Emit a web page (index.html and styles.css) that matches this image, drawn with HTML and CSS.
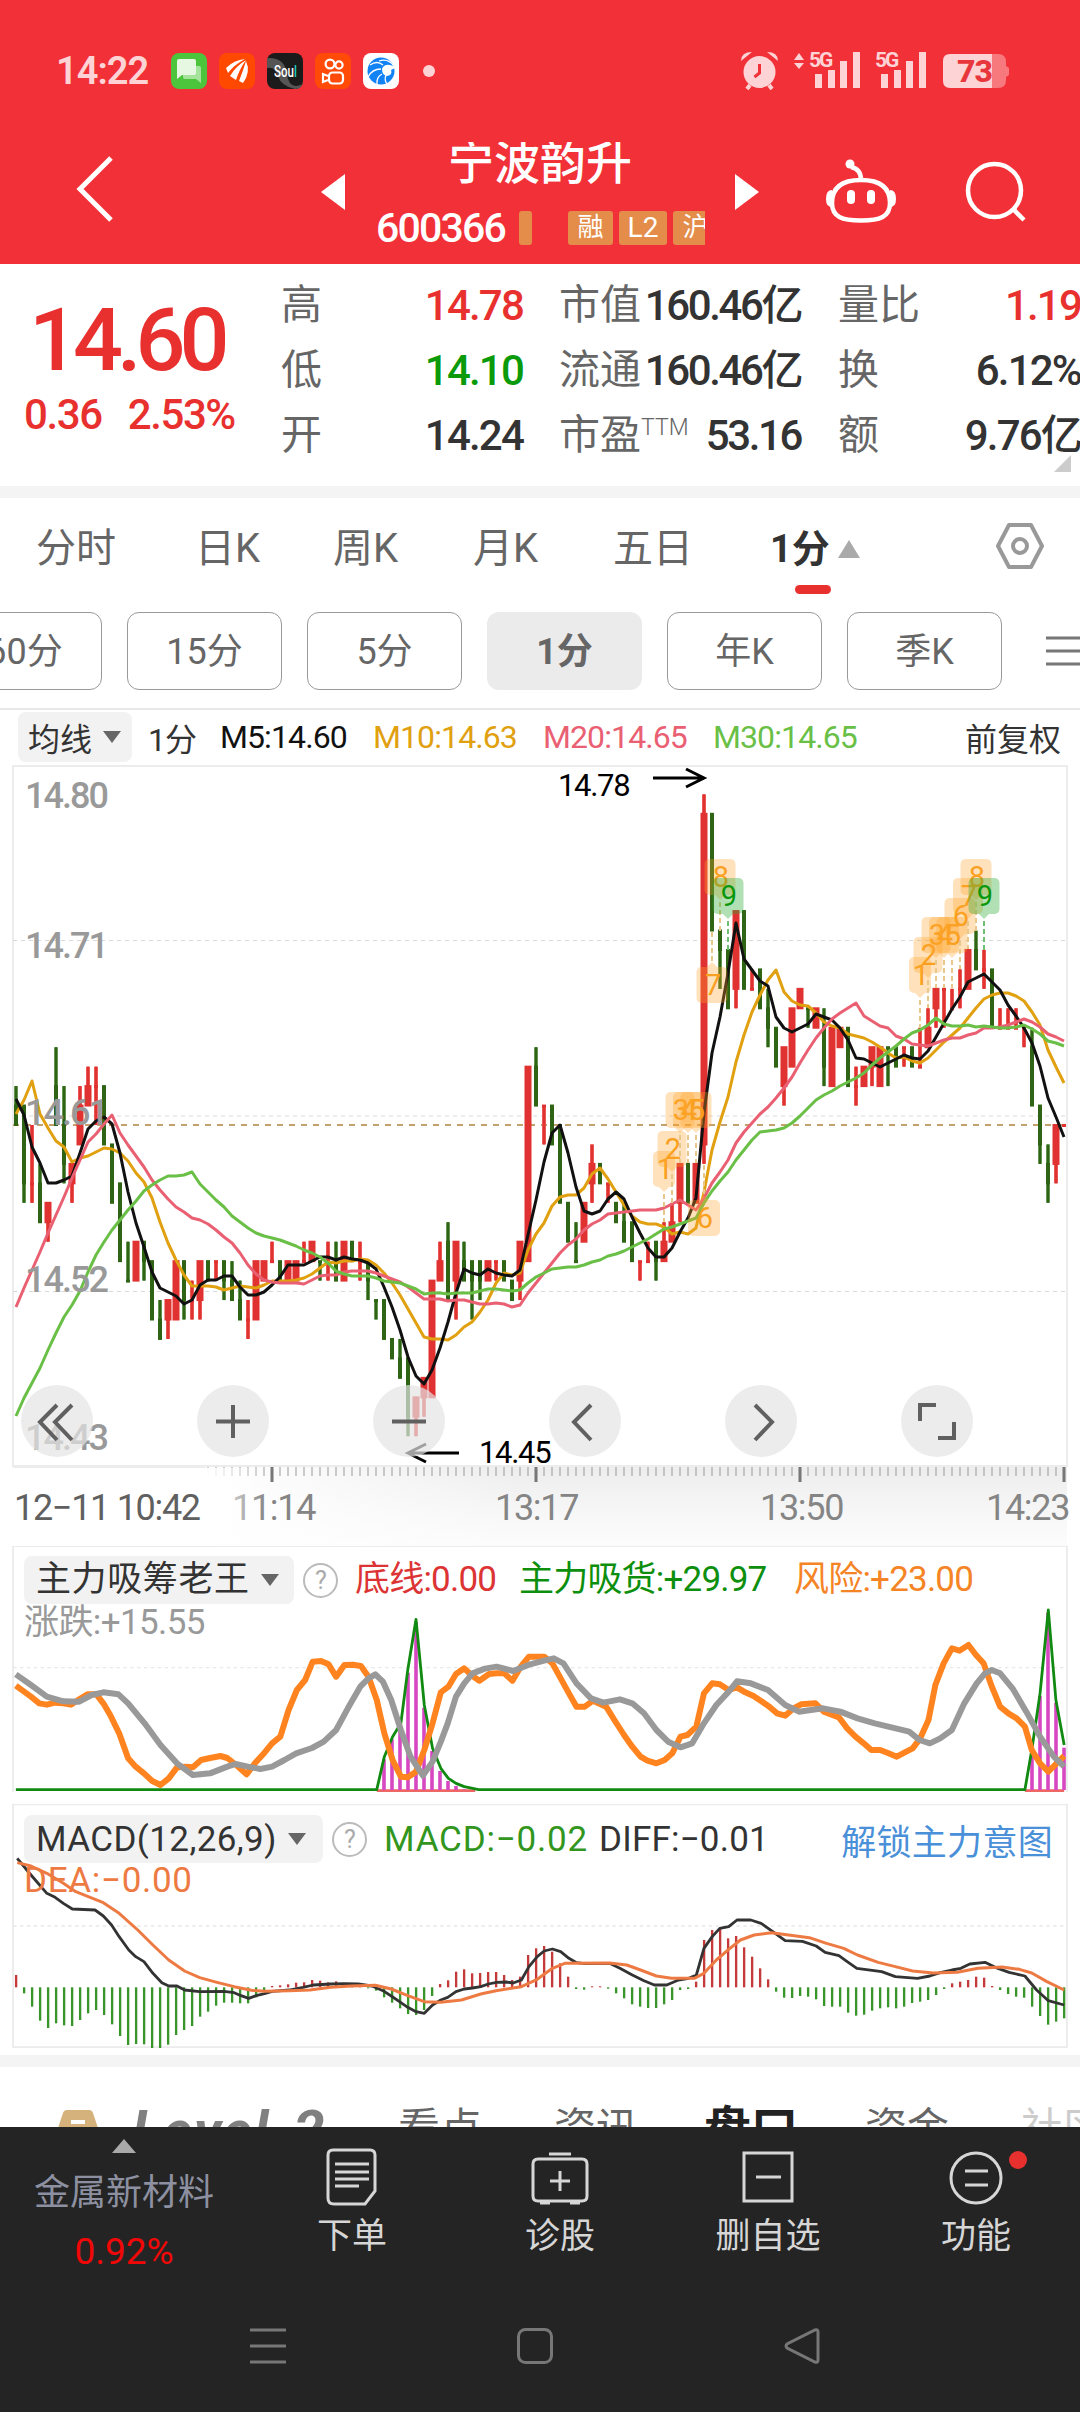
FILE: index.html
```html
<!DOCTYPE html>
<html lang="zh-CN">
<head>
    <meta charset="UTF-8">
    <meta name="viewport" content="width=device-width, initial-scale=1.0">
    <title>宁波韵升 600366</title>
    <link rel="stylesheet" href="styles.css">
</head>
<body>
    <header class="top">
        <div class="status">
            <span class="clock">14:22</span>
            <div class="apps">
                <svg class="app" viewBox="0 0 36 36"><rect width="36" height="36" rx="8" fill="#4cc43c"/><path d="M14 13h14q2 0 2 2v15l-5-4H14q-2 0-2-2v-9q0-2 2-2z" fill="#a5e29b"/><path d="M8 6h15q2 0 2 2v12q0 2-2 2H11l-5 4V8q0-2 2-2z" fill="#e6f7e2"/></svg>
                <svg class="app" viewBox="0 0 36 36"><rect width="36" height="36" rx="8" fill="#ff4800"/><g fill="#fff"><path d="M7 15Q15 7 26 6Q15 12 9 20z"/><path d="M11 23Q17 13 27 7Q20 17 17 27z"/><path d="M20 28Q24 18 27 8Q32 19 24 30z"/></g></svg>
                <svg class="app" viewBox="0 0 36 36"><rect width="36" height="36" rx="8" fill="#1b1b1b"/><path d="M0 5Q18 4 20 21T36 31V28Q36 36 28 36Q14 33 11 23T0 15z" fill="#555"/><text x="7" y="24" class="soul" textLength="23" lengthAdjust="spacingAndGlyphs">Sou<tspan fill="#1fd0c0">l</tspan></text></svg>
                <svg class="app" viewBox="0 0 36 36"><rect width="36" height="36" rx="8" fill="#ff4a08"/><g fill="none" stroke="#fff" stroke-width="2.2"><circle cx="15" cy="11" r="4.4"/><circle cx="24" cy="12" r="3.6"/><rect x="14" y="19.500" width="14" height="11" rx="3.500"/><path d="M13 23l-5-2v8l5-2"/></g></svg>
                <svg class="app" viewBox="0 0 36 36"><rect width="36" height="36" rx="8" fill="#fff"/><circle cx="18" cy="18" r="13.500" fill="#1283f5"/><g fill="none" stroke="#fff" stroke-width="1.300"><path d="M20 12Q14 7 7 12M18 16Q9 16 5 24M19 21Q13 24 14 32M23 22Q21 27 24 31M16 8Q25 5 31 13"/></g><path d="M19 16Q21 11 27 12L34 14L28 17Q30 22 24 23Q19 22 19 16z" fill="#fff"/></svg>
            </div>
            <i class="dot"></i>
            <svg class="signals" width="270" height="42" viewBox="740 50 270 42">
                <g fill="#fdd3d5">
                    <circle cx="759.500" cy="72" r="16"/><path d="M741 61q0-9 11-9zM778 61q0-9-11-9z"/><path d="M750 85l-3 4M769 85l3 4" stroke="#fdd3d5" stroke-width="4"/>
                    <path d="M794 60l5-7 5 7zM794 63l5 6 5-6z"/>
                    <path d="M815 74h7v14h-7zM828 70h7v18h-7zM840 61h7v27h-7zM853 52h7v36h-7zM881 74h7v14h-7zM894 70h7v18h-7zM906 61h7v27h-7zM919 52h7v36h-7z"/>
                    <text x="809" y="67" class="net">5G</text><text x="875" y="67" class="net">5G</text>
                    <path d="M992 54h-42q-7 0-7 7v20q0 7 7 7h42z"/>
                </g>
                <path d="M992 54h6q8 0 8 8v4l3 2v7l-3 2v3q0 8-8 8h-6z" fill="#f7787d"/>
                <path d="M759.500 64v9l-5 4" fill="none" stroke="#f23037" stroke-width="3"/>
                <text x="957" y="82" class="batt">73</text>
            </svg>
        </div>
        <div class="titlebar">
            <svg class="back" width="40" height="68" viewBox="0 0 40 68"><path d="M35 3L4 34l31 31" fill="none" stroke="#fff" stroke-width="5"/></svg>
            <svg class="prev" width="26" height="38"><path d="M25 1v36L1 19z" fill="#fff"/></svg>
            <div class="stock">
                <h1>宁波韵升</h1>
                <div class="code">
                    <span class="num">600366</span>
                    <i class="sliver"></i>
                    <b>融</b><b class="l2">L2</b><b class="cut">沪</b>
                </div>
            </div>
            <svg class="next" width="26" height="38"><path d="M1 1v36l24-18z" fill="#fff"/></svg>
            <svg class="robot" width="72" height="68" viewBox="825 157 72 68"><g fill="none" stroke="#fff" stroke-width="4.500"><path d="M861 180C885 180 890 192 890 203C890 217 880 220.500 861 220.500S832 217 832 203C832 192 837 180 861 180z"/><path d="M861 180q0-11-10-13"/></g><g fill="#fff"><circle cx="850" cy="164" r="4.500"/><rect x="847" y="190" width="8" height="14" rx="4"/><rect x="867" y="190" width="8" height="14" rx="4"/><path d="M832 190q-6 0-6 9q0 8 6 8zM890 190q6 0 6 9q0 8-6 8z"/></g></svg>
            <svg class="search" width="64" height="64" viewBox="963 160 64 64"><g fill="none" stroke="#fff" stroke-width="4.500"><circle cx="994.500" cy="190.500" r="26.500"/><path d="M1013 209l11 11"/></g></svg>
        </div>
    </header>

    <section class="quote">
        <div class="price">
            <strong>14.60</strong>
            <p><span>0.36</span><span>2.53%</span></p>
        </div>
        <dl class="c1">
            <dt>高</dt><dd class="up">14.78</dd>
            <dt>低</dt><dd class="down">14.10</dd>
            <dt>开</dt><dd>14.24</dd>
        </dl>
        <dl class="c2">
            <dt>市值</dt><dd>160.46亿</dd>
            <dt>流通</dt><dd>160.46亿</dd>
            <dt>市盈<sup>TTM</sup></dt><dd>53.16</dd>
        </dl>
        <dl class="c3">
            <dt>量比</dt><dd class="up">1.19</dd>
            <dt>换</dt><dd>6.12%</dd>
            <dt>额</dt><dd>9.76亿</dd>
        </dl>
        <i class="more"></i>
    </section>

    <nav class="tabs">
        <a>分时</a><a>日K</a><a>周K</a><a>月K</a><a>五日</a>
        <a class="on">1分</a><i class="tri-up"></i>
        <svg class="gear" width="50" height="48" viewBox="0 0 50 48"><g fill="none" stroke="#999" stroke-width="4"><path d="M14 3h22l11 21-11 21H14L3 24z" stroke-linejoin="round"/><circle cx="25" cy="24" r="7"/></g></svg>
    </nav>

    <div class="periods">
        <button>60分</button><button>15分</button><button>5分</button><button class="on">1分</button><button>年K</button><button>季K</button>
        <svg width="36" height="30"><path d="M0 2h36M0 15h36M0 28h36" stroke="#777" stroke-width="3"/></svg>
    </div>

    <div class="ma">
        <span class="pick">均线<i></i></span>
        <span class="cyc">1分</span>
        <span class="m5">M5:14.60</span>
        <span class="m10">M10:14.63</span>
        <span class="m20">M20:14.65</span>
        <span class="m30">M30:14.65</span>
        <span class="fq">前复权</span>
    </div>

    <div class="kline">
        <svg id="kline" width="1080" height="706" viewBox="0 0 1080 706"></svg>
        <div class="tools">
            <span><svg viewBox="0 0 72 72"><path d="M36 20L19 37l17 18M51 20L34 37l17 18"/></svg></span>
            <span><svg viewBox="0 0 72 72"><path d="M36 20v33M19 36.500h34"/></svg></span>
            <span><svg viewBox="0 0 72 72"><path d="M19 36.500h34"/></svg></span>
            <span><svg viewBox="0 0 72 72"><path d="M42 20L25 37l17 18"/></svg></span>
            <span><svg viewBox="0 0 72 72"><path d="M30 20l17 17-17 18"/></svg></span>
            <span><svg viewBox="0 0 72 72"><path d="M19 36V20h16M37 53h16V37"/></svg></span>
        </div>
    </div>
    <svg id="axis" class="axis" width="1080" height="80" viewBox="0 1466 1080 80"></svg>

    <div class="panel p1">
        <svg id="ind1" class="plot" width="1080" height="246" viewBox="0 48 1568 738" preserveAspectRatio="none"></svg>
        <div class="legend">
            <span class="pick">主力吸筹老王<i></i></span><em>?</em>
            <span class="w141 c-red">底线:0.00</span>
            <span class="w252 c-green">主力吸货:+29.97</span>
            <span class="c-orange">风险:+23.00</span>
        </div>
        <div class="line2 c-gray">涨跌:+15.55</div>
    </div>

    <div class="panel p2">
        <svg id="ind2" class="plot" width="1080" height="244" viewBox="0 42 1568 732" preserveAspectRatio="none"></svg>
        <div class="legend">
            <span class="pick">MACD(12,26,9)<i></i></span><em>?</em>
            <span class="c-macd">MACD:−0.02</span>
            <span class="c-dark">DIFF:−0.01</span>
            <a class="unlock">解锁主力意图</a>
        </div>
        <div class="line2 c-dea">DEA:−0.00</div>
    </div>

    <nav class="subtabs">
        <svg width="40" height="40" viewBox="0 0 40 40"><path d="M9 2h22q3 0 4 3l5 15-5 14H5L0 20 5 5q1-3 4-3z" fill="#d5b27c"/><path d="M13 14h14" stroke="#fff" stroke-width="4"/></svg>
        <span class="lv">Level-2</span>
        <span>看点</span><span>资讯</span><span class="on">盘口</span><span>资金</span><span class="fade">社区</span>
    </nav>

    <footer class="bottom">
        <div class="bar">
            <div class="sector"><i></i><span>金属新材料</span><b>0.92%</b></div>
            <div class="item">
                <svg width="60" height="60" viewBox="0 0 60 60"><path d="M11 3h37q5 0 5 5v36l-10 13H12q-6 0-6-6V8q0-5 5-5M13 17h34M13 25h34M13 32h34M13 39h24"/></svg>下单</div>
            <div class="item">
                <svg width="60" height="60" viewBox="0 0 60 60"><path d="M8 12h44q5 0 5 5v32q0 5-5 5H8q-5 0-5-5V17q0-5 5-5zM19 7h22M30 24v20M20 34h20M10 56h10M40 56h10"/></svg>诊股</div>
            <div class="item">
                <svg width="60" height="60" viewBox="0 0 60 60"><path d="M6 6h48v48H6zM18 30h25"/></svg>删自选</div>
            <div class="item">
                <svg width="60" height="60" viewBox="0 0 60 60"><circle cx="30" cy="31" r="25"/><path d="M19 24h23M19 38h23"/></svg>功能<i class="badge"></i></div>
        </div>
        <div class="sysnav">
            <svg viewBox="0 0 36 36"><path d="M0 2h36M0 18h36M0 34h36"/></svg>
            <svg viewBox="0 0 36 36"><rect x="1.500" y="1.500" width="33" height="33" rx="7"/></svg>
            <svg viewBox="0 0 36 36"><path d="M31 2q3-1 3 2v28q0 3-3 2L3 20q-2-2 0-4z"/></svg>
        </div>
    </footer>

    <script src="chart.js"></script>
</body>
</html>
```

FILE: styles.css
```css
* {
    box-sizing: border-box;
}
body {
    margin: 0;
    width: 1080px;
    height: 2412px;
    overflow: hidden;
    background: #fff;
    color: #333;
    font-family: Roboto, "Noto Sans CJK SC", sans-serif;
}
svg {
    display: block;
    flex: none;
}
.top {
    height: 264px;
    background: #f23037;
    color: #fff;
}
.status {
    display: flex;
    align-items: center;
    height: 142px;
    padding-left: 56px;
}
.clock {
    width: 115px;
    font-size: 38px;
    font-weight: 600;
    letter-spacing: -1px;
    color: #fdd3d5;
}
.apps {
    display: flex;
    gap: 12px;
}
.app {
    width: 36px;
    height: 36px;
}
.soul {
    font-size: 17px;
    font-weight: 500;
    fill: #fff;
}
.dot {
    width: 12px;
    height: 12px;
    margin-left: 24px;
    border-radius: 50%;
    background: #fdd3d5;
}
.signals {
    margin-left: 305px;
}
.net {
    font-size: 21px;
    font-weight: 700;
    letter-spacing: -2px;
}
.batt {
    font-size: 32px;
    font-weight: 800;
    fill: #e8363d;
    letter-spacing: -1px;
}
.titlebar {
    display: flex;
    height: 122px;
}
.back {
    margin: 13px 0 0 76px;
}
.prev {
    margin: 31px 30px 0 204px;
}
.stock {
    width: 329px;
    overflow: hidden;
}
h1 {
    margin: -9px 0 0;
    padding-right: 1px;
    text-align: center;
    font-size: 46px;
    font-weight: 500;
    line-height: 60px;
}
.code {
    display: flex;
    align-items: center;
    height: 34px;
    margin-top: 18px;
}
.code .num {
    flex: none;
    width: 143px;
    font-size: 41px;
    font-weight: 500;
    letter-spacing: -1.8px;
}
.code b, .sliver {
    flex: none;
    height: 34px;
    border-radius: 3px;
    background: #e48d4b;
    font-size: 26px;
    font-weight: 400;
    line-height: 33px;
    text-align: center;
}
.code .sliver {
    width: 13px;
    margin-right: 36px;
}
.code b {
    width: 45px;
    margin-right: 6px;
}
.code b.l2 {
    width: 48px;
    font-size: 28px;
}
.next {
    margin: 31px 0 0 29px;
}
.robot {
    margin: 15px 0 0 65px;
}
.search {
    margin: 18px 0 0 66px;
}

.quote {
    position: relative;
    display: flex;
    height: 222px;
}
.price {
    width: 281px;
    padding-top: 28px;
    color: #e8312f;
}
.price strong {
    display: block;
    padding-left: 29px;
    font-size: 88px;
    font-weight: 500;
    line-height: 96px;
    letter-spacing: -6px;
}
.price p {
    display: flex;
    gap: 26px;
    margin: 2px 0 0 24px;
    font-size: 42px;
    font-weight: 500;
    line-height: 50px;
    letter-spacing: -1.4px;
}
dl {
    display: grid;
    grid-template-columns: 0 1fr;
    grid-auto-rows: 65px;
    margin: 9px 0 0;
    line-height: 65px;
    font-size: 42px;
}
dt {
    color: #666;
    font-size: 41px;
    white-space: nowrap;
}
dd {
    margin: 0 -2px 0 0;
    font-weight: 500;
    letter-spacing: -1.8px;
    text-align: right;
    white-space: nowrap;
}
.c1 {
    width: 240px;
}
.c2 {
    width: 240px;
    margin-left: 38px;
}
.c3 {
    width: 241px;
    margin-left: 39px;
}
.c2 dd {
    letter-spacing: -2.4px;
}
sup {
    font-size: 23px;
    font-weight: 300;
    line-height: 0;
    vertical-align: 14px;
}
.up {
    color: #e8312f;
}
.down {
    color: #0a9a0a;
}
.more {
    position: absolute;
    right: 9px;
    bottom: 14px;
    border-left: 17px solid transparent;
    border-bottom: 17px solid #ccc;
}

.tabs {
    display: flex;
    align-items: center;
    height: 126px;
    border-top: 12px solid #f4f4f4;
    padding: 0 0 12px 36px;
    font-size: 40px;
    color: #666;
    white-space: nowrap;
}
.tabs a {
    width: 159px;
    line-height: 102px;
}
.tabs a:nth-child(2) {
    width: 138px;
}
.tabs a:nth-child(3), .tabs a:nth-child(4) {
    width: 140px;
}
.tabs a:nth-child(5) {
    width: 157px;
}
.tabs .on {
    position: relative;
    width: 68px;
    font-size: 38px;
    font-weight: 700;
    color: #333;
}
.tabs .on::after {
    content: "";
    position: absolute;
    left: 25px;
    bottom: 6px;
    width: 36px;
    height: 9px;
    border-radius: 5px;
    background: #e8312f;
}
.tri-up {
    border: 11px solid transparent;
    border-top: 0;
    border-bottom: 18px solid #aaa;
}
.gear {
    margin: -6px 0 0 135px;
}
.periods {
    display: flex;
    align-items: center;
    gap: 25px;
    height: 98px;
    margin-left: -53px;
    padding-bottom: 18px;
    border-bottom: 2px solid #e8e8e8;
}
.periods button {
    flex: none;
    width: 155px;
    height: 78px;
    padding: 1px 0 0;
    border: 1.5px solid #999;
    border-radius: 12px;
    background: #fff;
    color: #666;
    font: 36px/1 Roboto, "Noto Sans CJK SC", sans-serif;
}
.periods .on {
    border: 0;
    background: #ebebeb;
    font-weight: 700;
}
.periods svg {
    margin-left: 19px;
}

.ma {
    display: flex;
    align-items: center;
    height: 54px;
    padding: 0 19px 0 18px;
    font-size: 32px;
    letter-spacing: -.9px;
    white-space: nowrap;
}
.pick {
    display: flex;
    align-items: center;
    height: 50px;
    border-radius: 8px;
    background: #f2f2f2;
    color: #333;
    letter-spacing: 0;
}
.pick i {
    margin-left: 11px;
    border: 9px solid transparent;
    border-bottom: 0;
    border-top: 12px solid #666;
}
.ma .pick {
    width: 114px;
    padding-left: 10px;
}
.cyc {
    width: 72px;
    margin-left: 16px;
}
.m5 {
    width: 153px;
    color: #111;
}
.m10 {
    width: 170px;
    color: #e0a010;
}
.m20 {
    width: 170px;
    color: #ea6073;
}
.m30 {
    color: #6abf47;
}
.fq {
    margin-left: auto;
    letter-spacing: 0;
}

.kline {
    position: relative;
    height: 702px;
}
.tools {
    position: absolute;
    left: 21px;
    top: 621px;
    display: flex;
    gap: 104px;
}
.tools span {
    width: 72px;
    height: 72px;
    border-radius: 50%;
    background: rgba(228, 228, 228, .7);
}
.tools path {
    fill: none;
    stroke: #606060;
    stroke-width: 4;
}
.scale {
    font-size: 36px;
    font-weight: 500;
    fill: #999;
    letter-spacing: -2px;
}
.note {
    font-size: 31px;
    fill: #000;
    letter-spacing: -1.3px;
}
.mark {
    font-size: 29px;
    text-anchor: middle;
}
.line {
    fill: none;
    stroke-width: 3;
    stroke-linejoin: round;
    vector-effect: non-scaling-stroke;
}
.time {
    font-size: 36px;
    letter-spacing: -1.3px;
    fill: #858585;
}

.panel {
    position: relative;
}
.p1 {
    height: 258px;
}
.p2 {
    height: 251px;
}
.plot {
    position: absolute;
    left: 0;
    top: 0;
}
.legend {
    position: relative;
    display: flex;
    align-items: center;
    height: 48px;
    margin: 0 27px 0 24px;
    top: 11px;
    font-size: 35px;
    letter-spacing: -.8px;
    white-space: nowrap;
}
.p1 .legend {
    line-height: 44px;
    top: 10px;
}
.legend .pick {
    width: 270px;
    height: 48px;
    padding-left: 12px;
    letter-spacing: .6px;
}
.p2 .pick {
    width: 299px;
    letter-spacing: .4px;
}
.legend em {
    width: 35px;
    height: 35px;
    margin: 0 17px 0 9px;
    border: 2.5px solid #bbb;
    border-radius: 50%;
    color: #aaa;
    font: 25px/31px Roboto, sans-serif;
    text-align: center;
}
.w141 {
    width: 164px;
}
.w252 {
    width: 275px;
}
.line2 {
    position: relative;
    top: 8px;
    margin-left: 24px;
    font-size: 35px;
    line-height: 42px;
    letter-spacing: -.6px;
}
.c-red {
    color: #dc3434;
}
.c-green {
    color: #0d8f0d;
}
.c-orange {
    color: #f58426;
}
.c-gray {
    color: #999;
}
.c-macd {
    width: 215px;
    color: #32961e;
    letter-spacing: .8px;
}
.c-dark {
    color: #333;
    letter-spacing: .2px;
}
.c-dea {
    color: #ee7a43;
    letter-spacing: .7px;
}
.unlock {
    margin-left: auto;
    color: #4a90d9;
    letter-spacing: .3px;
}

.subtabs {
    display: flex;
    height: 72px;
    overflow: hidden;
    border-top: 12px solid #f4f4f4;
    padding: 36px 0 0 58px;
    font-size: 42px;
    line-height: 52px;
    color: #666;
    white-space: nowrap;
}
.subtabs svg {
    margin-top: 5px;
}
.subtabs span {
    width: 156px;
    flex: none;
}
.subtabs .lv {
    width: 266px;
    margin-left: 34px;
    font-size: 56px;
    font-weight: 700;
    font-style: italic;
    line-height: 56px;
    letter-spacing: 1.8px;
    color: #808080;
}
.subtabs span:nth-child(4) {
    width: 150px;
}
.subtabs .on {
    width: 161px;
    font-size: 47px;
    font-weight: 700;
    color: #222;
}
.subtabs .fade {
    color: #ccc;
}

.bottom {
    height: 285px;
    background: #242424;
}
.bar {
    display: flex;
    height: 172px;
}
.sector {
    display: flex;
    flex-direction: column;
    align-items: center;
    width: 248px;
    padding-top: 12px;
    color: #8d90a0;
    font-size: 36px;
}
.sector i {
    border: 12.5px solid transparent;
    border-top: 0;
    border-bottom: 14px solid #aaa;
}
.sector span {
    margin-top: 10px;
}
.sector b {
    margin-top: 15px;
    font-size: 37px;
    font-weight: 400;
    color: #f00808;
}
.item {
    position: relative;
    display: flex;
    flex-direction: column;
    align-items: center;
    width: 208px;
    padding-top: 20px;
    font-size: 35px;
    line-height: 50px;
    color: #d6d6d6;
}
.item svg {
    margin-bottom: 5px;
    fill: none;
    stroke: #d6d6d6;
    stroke-width: 3;
}
.badge {
    position: absolute;
    left: 137px;
    top: 24px;
    width: 18px;
    height: 18px;
    border-radius: 50%;
    background: #e8312f;
}
.sysnav {
    display: flex;
    gap: 231px;
    padding: 29px 0 0 250px;
}
.sysnav svg {
    width: 36px;
    height: 36px;
    fill: none;
    stroke: #777;
    stroke-width: 3;
}
```

FILE: chart.js
```js
// minute bars: [colour, high, body top, body bottom, low], counted in ticks below the 14.60 line
const bars = [
    'g,-2,-1,0,0','g,-1,-1,3,4','r,0,3,3,4','g,2,3,5,5','r,4,4,5,6','g,-4,-2,0,0','g,-2,0,2,3','r,2,2,3,4','r,-2,-1,1,1','r,-3,-2,-1,-1',
    'r,-3,-2,-2,0','g,-2,-2,1,1','g,1,1,4,4','g,3,3,7,7','g,6,8,8,8','r,6,6,8,8','g,6,6,7,8','g,7,7,10,10','g,9,10,11,11','r,9,9,10,11',
    'r,7,7,10,10','g,7,7,9,10','r,8,9,9,10','r,7,7,9,10','g,7,7,8,8','r,7,7,7,8','g,7,7,8,9','g,7,8,9,9','g,8,9,10,10','r,9,10,10,11',
    'r,7,7,10,10','r,7,7,8,8','r,6,7,7,7','g,7,7,8,8','r,7,7,8,8','r,7,7,8,8','r,6,7,7,7','r,6,6,7,7','g,7,7,7,8','r,6,7,7,8',
    'g,6,7,8,8','r,6,6,8,8','g,6,6,7,7','r,6,7,7,8','g,7,7,8,9','g,9,9,9,10','g,9,9,11,11','g,11,11,12,12','g,11,12,13,13','g,12,12,15,16',
    'r,14,14,15,16','r,13,13,14,15','r,8,8,14,14','r,6,7,8,8','g,5,6,9,9','r,6,6,8,10','g,6,7,8,8','g,7,7,8,10','g,7,7,8,9','r,7,7,8,8',
    'r,7,7,7,8','g,7,7,8,8','g,8,8,9,9','r,6,6,8,9','r,-3,-3,7,7','g,-4,-3,-1,-1','r,-1,-1,-1,1','g,-1,-1,1,1','g,0,0,4,4','g,4,4,6,6',
    'g,5,7,7,7','r,4,4,6,6','r,1,2,3,4','g,2,2,3,3','r,3,3,3,4','g,4,4,5,5','g,4,5,6,6','g,5,5,7,7','r,7,7,7,8','r,6,7,7,7',
    'g,6,6,7,8','r,5,6,7,7','r,4,5,6,6','r,2,2,4,5','g,2,2,4,4','r,2,2,4,4','r,-17,-16,1,2','g,-16,-16,-10,-10','g,-10,-10,-9,-7','g,-9,-9,-6,-6',
    'r,-11,-11,-7,-6','g,-11,-11,-7,-7','r,-8,-7,-7,-7','g,-8,-8,-6,-6','g,-7,-6,-5,-4','g,-5,-5,-3,-3','r,-4,-4,-2,-1','r,-6,-6,-3,-3','r,-7,-7,-6,-6','g,-6,-6,-6,-5',
    'r,-6,-6,-5,-5','g,-6,-5,-3,-2','r,-5,-5,-2,-2','r,-5,-5,-4,-4','g,-5,-5,-2,-2','r,-3,-2,-2,-1','r,-3,-3,-2,-2','r,-4,-4,-3,-2','r,-4,-4,-2,-2','g,-4,-4,-4,-2',
    'g,-4,-4,-3,-3','r,-4,-4,-4,-3','g,-4,-4,-3,-3','r,-5,-3,-3,-3','r,-6,-5,-4,-4','r,-7,-7,-6,-5','r,-7,-7,-7,-5','r,-7,-6,-6,-6','r,-8,-7,-7,-6','r,-9,-9,-7,-7',
    'g,-10,-9,-8,-8','r,-9,-8,-8,-7','g,-8,-8,-5,-5','r,-6,-5,-5,-5','r,-6,-5,-5,-5','r,-6,-5,-5,-5','r,-5,-5,-5,-4','g,-5,-4,-1,-1','g,-1,-1,1,2','g,1,2,3,4',
    'r,0,0,2,3','r,0,0,0,0'
];
// moving averages, one y per bar
const ma = {
    '#e0a010': [354,340,321,354,368,381,387,402,398,396,392,388,389,393,401,413,422,438,462,483,500,515,526,526,526,527,530,528,526,527,528,525,521,521,521,520,518,514,508,502,503,501,501,499,500,505,513,523,535,549,563,577,579,579,580,575,567,562,552,540,523,513,515,513,490,474,463,446,437,435,435,428,414,408,419,432,445,456,462,464,464,467,474,472,474,468,432,390,362,337,302,275,252,235,220,210,232,241,245,246,253,262,266,268,274,276,278,282,287,293,298,297,301,303,298,290,282,275,268,258,248,239,235,233,233,236,241,252,265,290,307,323],
    '#111': [339,355,387,403,423,423,420,416,393,369,361,357,364,393,432,463,487,512,528,532,536,544,540,525,520,520,516,516,527,535,535,532,525,517,505,505,505,501,497,497,500,497,499,500,503,509,527,547,570,597,616,624,610,588,562,533,509,513,515,509,513,515,516,510,475,440,402,373,365,393,427,451,454,451,439,432,439,457,473,488,497,497,488,472,458,438,353,293,257,213,163,199,210,221,226,257,268,272,268,264,254,257,260,268,280,298,299,303,307,303,299,295,298,299,291,277,263,249,237,222,218,214,222,230,245,256,268,283,306,338,357,377],
    '#ea6073': [547,528,510,492,473,455,437,418,400,382,374,364,355,373,385,396,407,420,430,439,447,452,458,460,464,470,477,483,493,505,514,520,522,523,523,523,524,520,516,515,515,512,511,511,511,513,516,519,522,527,533,539,539,539,541,540,540,542,544,544,543,544,547,545,533,523,513,503,493,485,479,470,464,460,454,453,452,451,450,450,450,448,444,440,445,450,438,423,412,400,383,372,363,354,347,338,328,317,303,290,278,268,259,253,248,243,256,261,266,268,276,279,284,285,286,283,280,278,278,275,273,268,268,267,265,262,259,262,267,274,277,281],
    '#6abf47': [656,638,623,608,590,573,557,545,531,512,495,482,470,460,450,441,431,425,420,416,416,415,412,424,432,440,447,456,462,468,473,476,478,480,483,486,490,493,497,503,511,514,516,516,516,518,521,522,523,526,529,534,533,533,534,533,533,533,531,529,529,530,531,530,523,517,513,509,508,507,507,505,502,500,496,494,491,487,483,479,474,469,467,464,461,458,443,431,421,412,400,390,380,372,371,370,368,363,356,348,340,335,331,326,322,318,313,305,298,292,286,279,273,270,265,258,264,266,266,265,267,266,267,268,268,267,265,269,274,281,283,286]
};
// nine-turn markers: [digit, bar, box top, width, end of the dashed stem]
const marks = [
    [1,81,391,22,462],[2,82,371,29,443],[3,83,332,29,403],[4,84,332,30,403],[5,85,332,31,403],[6,86,440,32,405],
    [7,87,207,31,172],[8,88,99,31,171],[9,89,118,31,190],
    [1,113,197,22,268],[2,114,177,29,248],[3,115,157,29,228],[4,116,157,30,228],[5,117,157,31,228],[6,118,138,31,209],
    [7,119,118,30,189],[8,120,99,31,171],[9,121,118,31,190]
];

const X = k => 16 + 8 * k;
const Y = t => 361 + 19.45 * t;
const box = (x, y, w, h, c) => `<rect x="${x}" y="${y}" width="${w}" height="${h}" fill="${c}"/>`;
const hline = (y, c, dash, w) => `<path d="M13 ${y}H1066" stroke="${c}" stroke-width="${w}" stroke-dasharray="${dash}"/>`;

function drawKline() {
    let s = '<rect x="13" y="2" width="1054" height="700" fill="none" stroke="#ececec" stroke-width="2"/>';
    s += hline(176.5, '#d8d8d8', '4 4', 1) + hline(352, '#ececec', '4 4', 2) + hline(361, '#c4a06c', '6 6', 2) + hline(527.5, '#d8d8d8', '4 4', 1);
    bars.forEach((b, k) => {
        const [c, h, t, o, l] = b.split(',').map((v, i) => i ? Y(+v) : v);
        const red = c === 'r';
        s += box(X(k) - 2, h, 4, l - h, red ? '#ea5652' : '#649553');
        s += box(X(k) - 1, h, 2, l - h, red ? '#e03230' : '#2e6414');
        const w = red && o - t > 5 ? 7 : 4;
        s += box(X(k) - w / 2, t - 1, w, Math.max(o - t, 1) + 2, red ? '#e03230' : '#2e6414');
    });
    // the y values are measured from 760, the canvas starts at 764
    for (const c in ma) {
        s += `<polyline class="line" stroke="${c}" points="${ma[c].map((y, k) => X(k) + ',' + (y - 4)).join(' ')}"/>`;
    }
    marks.forEach(([n, k, top, w, end]) => {
        const x = X(k), y = top - 4, green = n === 9;
        const fill = green ? 'rgba(40,170,50,.36)' : 'rgba(255,165,45,.32)';
        const up = end < top;
        const tip = up ? `M${x - 5} ${y}l5-5 5 5z` : `M${x - 5} ${y + 36}l5 5 5-5z`;
        s += `<path d="M${x} ${up ? y - 6 : y + 43}V${end - 4}" stroke="${green ? '#6fbf73' : '#e8c88a'}" stroke-width="2" stroke-dasharray="5 3"/>`;
        s += `<rect x="${x - w / 2}" y="${y}" width="${w}" height="36" rx="5" fill="${fill}"/><path d="${tip}" fill="${fill}"/>`;
        s += `<text class="mark" x="${x + 1}" y="${y + 28}" fill="${green ? '#0a970a' : '#faa021'}">${n}</text>`;
    });
    [['14.80', 44], ['14.71', 194], ['14.61', 361], ['14.52', 528], ['14.43', 686]].forEach(([t, y]) => {
        s += `<text class="scale" x="25" y="${y}">${t}</text>`;
    });
    s += '<text class="note" x="558" y="32">14.78</text><text class="note" x="479" y="699">14.45</text>';
    s += '<path d="M653 14h50M686 5l18 9-18 9M459 689h-50M426 680l-18 9 18 9" fill="none" stroke="#000" stroke-width="3"/>';
    document.getElementById('kline').innerHTML = s;
}

function drawAxis() {
    let s = '<defs><linearGradient id="v" x2="0" y2="1"><stop stop-color="#ededed"/><stop offset=".6" stop-color="#f7f7f7"/><stop offset="1" stop-color="#fcfcfc"/></linearGradient>'
        + '<linearGradient id="h"><stop stop-color="#fff"/><stop offset="1" stop-color="#fff" stop-opacity="0"/></linearGradient></defs>'
        + '<rect x="13" y="1467" width="1054" height="79" fill="url(#v)"/>';
    s += '<rect x="205" y="1467" width="320" height="79" fill="url(#h)"/>';
    for (let k = 24; k < 132; k++) {
        const big = (k + 1) % 33 === 0;
        s += box(X(k) - (big ? 1.5 : .5), 1467, big ? 3 : 1, big ? 15 : 9, big ? '#777' : '#999');
    }
    [['11:14', 232], ['13:17', 495], ['13:50', 760], ['14:23', 986]].forEach(([t, x]) => {
        s += `<text class="time" x="${x}" y="1520">${t}</text>`;
    });
    s += '<rect x="0" y="1468" width="205" height="78" fill="#fff"/><rect x="205" y="1468" width="62" height="78" fill="url(#h)"/>';
    s += '<text class="time" x="14" y="1520" style="fill:#606060">12−11 10:42</text>';
    document.getElementById('axis').innerHTML = s;
}

// the two lower panels share one x step
const PX = k => 23.2 + 11.615 * k;
const curve = (pts, c, w) => `<polyline class="line" stroke="${c}" style="stroke-width:${w}px" points="${pts}"/>`;

function drawInd1() {
    let s = '<path d="M19 786V48H1549V786" class="line" stroke="#ececec" style="stroke-width:2px"/><path d="M19 413H1549" stroke="#e8e8e8" stroke-width="4" stroke-dasharray="5 5"/>';
    const spike = {46: 680, 47: 620, 48: 580, 49: 420, 50: 268, 51: 525, 52: 655, 53: 715, 54: 745, 55: 760, 56: 770, 127: 660, 128: 490, 129: 240, 130: 510, 131: 645};
    s += '<path d="M547 782H690M1488 782H1545" class="line" stroke="#e66" style="stroke-width:3px"/>';
    for (const k in spike) s += box(PX(+k) - 2.6, spike[k] + 8, 5.2, 772 - spike[k], '#d747c2');
    s += curve('23,779 547,779 558,680 570,620 582,580 592,420 604,268 616,525 628,655 640,715 651,745 662,760 674,770 695,779 1488,779 1498,660 1510,490 1522,240 1533,510 1545,645', '#108a10', 2.8);
    s += curve('23,467 45,500 57,520 68,524 80,518 92,520 103,524 115,508 127,493 140,493 150,520 160,555 173,610 186,685 197,710 209,730 221,753 233,765 245,745 257,712 270,710 280,712 292,690 305,684 320,678 330,684 343,705 358,733 370,700 384,668 395,640 407,620 419,540 431,480 443,450 454,395 466,393 477,403 488,440 500,405 512,404 524,408 535,440 547,510 558,610 570,690 582,740 592,742 604,725 616,660 628,580 640,487 651,470 662,432 674,415 686,438 696,452 710,432 721,430 732,430 744,452 756,410 768,380 790,380 802,400 814,445 826,490 837,530 849,530 861,512 880,530 892,570 906,615 918,650 930,680 940,692 953,700 965,690 976,670 988,620 998,615 1011,590 1022,490 1034,460 1045,463 1058,480 1070,472 1082,487 1094,498 1105,513 1117,530 1128,550 1140,557 1152,535 1163,523 1184,520 1196,545 1218,562 1230,595 1242,620 1254,640 1265,660 1278,660 1290,670 1302,680 1313,668 1325,655 1336,625 1348,570 1358,465 1370,400 1382,355 1393,362 1406,345 1417,375 1428,400 1440,470 1452,530 1464,550 1476,565 1488,590 1498,660 1510,700 1522,725 1534,700 1545,678', '#ff8420', 6);
    s += curve('23,433 45,465 68,500 92,514 115,515 133,495 150,487 172,493 186,520 210,580 233,645 257,700 280,735 305,730 330,710 342,702 360,710 378,717 395,710 413,690 430,670 453,654 470,635 488,600 505,535 523,470 535,445 545,433 556,455 568,510 582,600 596,680 614,737 628,695 640,635 650,580 662,500 674,460 686,430 704,416 721,410 745,423 768,404 790,392 804,385 818,400 837,460 858,505 876,518 900,508 918,520 935,550 953,600 970,635 988,652 1005,640 1022,580 1040,525 1058,485 1070,454 1090,460 1115,480 1140,525 1160,545 1195,535 1220,545 1245,565 1270,580 1320,605 1335,630 1350,640 1365,625 1382,600 1400,520 1418,460 1430,430 1440,420 1452,430 1470,475 1490,545 1510,620 1530,680 1545,710', '#999', 6);
    document.getElementById('ind1').innerHTML = s;
}

function drawMacd() {
    const hist = [555,610,650,692,714,700,706,708,690,670,660,675,703,738,765,762,763,775,775,764,735,720,708,680,665,647,638,638,640,640,622,605,588,586,583,578,577,570,572,577,574,580,584,588,595,602,622,638,655,672,675,660,618,582,571,545,538,550,549,546,546,555,570,560,495,475,468,485,520,560,597,599,589,589,596,610,625,643,650,654,654,643,630,600,597,575,450,420,413,445,438,472,500,535,568,605,623,624,618,620,628,648,650,650,668,677,674,662,655,652,655,650,639,635,630,615,597,580,575,570,560,563,588,600,612,620,623,650,678,704,695,685];
    let s = '<path d="M19 43H1549V772H19Z" class="line" stroke="#ececec" style="stroke-width:2px"/><path d="M19 408H1549" stroke="#e8e8e8" stroke-width="4" stroke-dasharray="5 5"/>';
    hist.forEach((y, k) => {
        s += box(PX(k) - 1.5, Math.min(y, 592), 3.4, Math.abs(592 - y), y < 592 ? '#c43a3a' : '#38952a');
    });
    s += curve('25,205 45,255 68,310 80,322 92,340 105,357 138,360 150,378 162,405 173,440 187,480 197,500 209,515 222,550 235,578 245,588 257,588 268,600 290,605 325,604 340,608 350,617 361,625 372,617 384,611 395,604 420,600 440,592 455,585 480,582 500,581 520,582 540,588 556,602 568,618 580,635 592,652 604,665 616,670 628,645 640,630 650,622 662,605 674,597 686,594 698,590 709,582 721,577 735,576 745,579 757,570 768,530 780,500 790,483 802,477 814,485 826,505 837,518 849,521 885,520 900,535 918,555 935,572 950,585 968,585 985,570 1000,565 1011,555 1022,475 1034,440 1045,415 1058,410 1070,390 1090,390 1105,400 1122,425 1140,452 1165,454 1185,468 1198,487 1218,497 1230,515 1244,535 1280,545 1300,560 1332,565 1350,558 1365,548 1382,540 1395,535 1408,522 1430,517 1445,532 1465,547 1488,558 1505,600 1522,632 1545,645', '#333', 2.8);
    s += curve('25,218 45,228 68,250 92,280 110,305 150,338 173,370 200,420 222,465 245,510 268,543 290,563 315,577 340,590 365,601 385,604 420,602 450,600 480,592 510,588 545,586 568,597 592,617 616,635 640,637 670,630 698,612 720,602 757,590 780,568 802,535 820,520 885,519 910,525 930,540 953,558 975,565 1008,565 1022,550 1040,510 1058,478 1075,450 1095,435 1120,428 1145,435 1175,443 1200,460 1225,475 1245,495 1275,517 1300,530 1325,543 1355,549 1390,547 1420,535 1455,531 1480,538 1498,549 1520,575 1545,600', '#ee7a43', 3);
    document.getElementById('ind2').innerHTML = s;
}

drawKline();
drawAxis();
drawInd1();
drawMacd();
```
